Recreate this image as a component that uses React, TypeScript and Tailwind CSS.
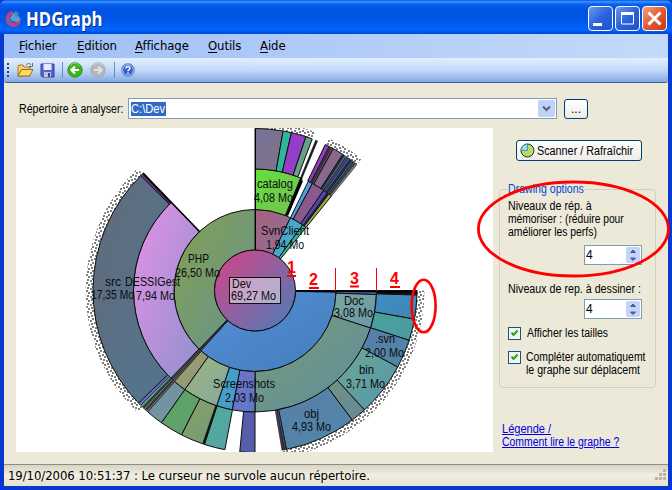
import React from "react";

const CX = 239;
const CY = 162.5;
const R = [0, 40.5, 81, 121.5, 162];

const polar = (r: number, deg: number) => {
  const a = (deg * Math.PI) / 180;
  return `${(CX + r * Math.sin(a)).toFixed(2)} ${(CY - r * Math.cos(a)).toFixed(2)}`;
};

const ring = (r0: number, r1: number, a: number, b: number) => {
  const large = b - a > 180 ? 1 : 0;
  return `M${polar(r0, a)}L${polar(r1, a)}A${r1} ${r1} 0 ${large} 1 ${polar(r1, b)}L${polar(r0, b)}A${r0} ${r0} 0 ${large} 0 ${polar(r0, a)}Z`;
};

// level, start angle, end angle, first colour, last colour
type Segment = [number, number, number, string, string];

const segments: Segment[] = [
  [2, 0, 26, "#a6627f", "#8f6f94"],
  [2, 26, 36, "#479ed0", "#51aec4"],
  [2, 36, 39, "#35b3a0", "#24c184"],
  [2, 90, 91.2, "#111827", "#111827"],
  [2, 91.2, 222, "#568ddb", "#427fb8"],
  [2, 222, 222.7, "#777", "#555"],
  [2, 222.7, 223.6, "#333", "#555"],
  [2, 223.6, 360, "#85a04f", "#659391"],
  [3, 0, 22.1, "#63e13d", "#76bf51"],
  [3, 22.1, 22.9, "#000", "#000"],
  [3, 26, 28.2, "#429de6", "#55a1d2"],
  [3, 28.2, 34.4, "#925588", "#805d96"],
  [3, 34.4, 36.6, "#5c3bb4", "#5249a3"],
  [3, 36.6, 37.4, "#202a48", "#1c2430"],
  [3, 37.4, 39, "#a5b34b", "#80a144"],
  [3, 90, 91.9, "#6670d0", "#5966b4"],
  [3, 91.9, 108, "#79a7a1", "#6998a8"],
  [3, 108, 180, "#789b76", "#5e8da2"],
  [3, 180, 190.8, "#7171cb", "#5d7bc4"],
  [3, 190.8, 198.4, "#3ca0d5", "#4b9dbf"],
  [3, 198.4, 215.3, "#9ab580", "#86a89d"],
  [3, 215.3, 221.6, "#a39f68", "#869780"],
  [3, 221.6, 222.3, "#999", "#555"],
  [3, 222.3, 223.1, "#333", "#777"],
  [3, 223.1, 223.8, "#777", "#333"],
  [3, 223.8, 316.5, "#e392e4", "#9190cf"],
  [4, 0, 10, "#777398", "#817186"],
  [4, 10, 13, "#24bea0", "#39ac98"],
  [4, 13, 18.3, "#9c37cd", "#8e45bf"],
  [4, 18.3, 20.7, "#62a38d", "#6f9c83"],
  [4, 22, 22.7, "#4c3448", "#000"],
  [4, 25.7, 27.3, "#a637c5", "#813cad"],
  [4, 27.3, 28.1, "#35224c", "#5e435f"],
  [4, 28.1, 28.9, "#806071", "#4d394c"],
  [4, 28.9, 32.8, "#926686", "#7f6b98"],
  [4, 32.8, 33.5, "#36304d", "#24243f"],
  [4, 33.5, 34.3, "#568968", "#38674c"],
  [4, 34.3, 35.1, "#6134b5", "#4f45a4"],
  [4, 35.1, 35.9, "#536bc3", "#314e8a"],
  [4, 35.9, 36.7, "#364057", "#111e33"],
  [4, 36.7, 37.4, "#447c9b", "#314153"],
  [4, 37.4, 38.2, "#30353f", "#5d6067"],
  [4, 38.2, 39, "#8d899d", "#656a78"],
  [4, 90, 91.6, "#111", "#111"],
  [4, 91.6, 100.2, "#408cc3", "#3e86b4"],
  [4, 100.2, 107.9, "#4ca098", "#489ca4"],
  [4, 107.9, 118.2, "#597dad", "#5185a4"],
  [4, 118.2, 137.5, "#6ba992", "#5694ad"],
  [4, 137.5, 143.1, "#739386", "#648798"],
  [4, 143.1, 168.8, "#597eaa", "#5088a6"],
  [4, 168.8, 169.6, "#495f70", "#445"],
  [4, 169.6, 170.4, "#648", "#333"],
  [4, 180, 185.4, "#565da9", "#585dac"],
  [4, 190.7, 198.2, "#51ada0", "#55a1a3"],
  [4, 198.2, 198.8, "#111", "#111"],
  [4, 198.8, 207, "#88a064", "#759b7a"],
  [4, 207, 215.3, "#5aa558", "#62a078"],
  [4, 215.3, 221.5, "#7591a5", "#6e969b"],
  [4, 221.5, 222.1, "#999", "#777"],
  [4, 222.1, 222.7, "#555", "#333"],
  [4, 222.7, 223.4, "#999", "#555"],
  [4, 223.4, 224, "#333", "#555"],
  [4, 224, 224.9, "#4eb394", "#51a18c"],
  [4, 224.9, 226, "#756cc9", "#6f61b2"],
  [4, 226, 315.2, "#626b7b", "#51758f"],
  [4, 315.2, 316, "#703389", "#552266"],
  [4, 316, 316.5, "#574b57", "#333"],
];

const hatched: [number, number][] = [
  [0, 20.8],
  [26, 39],
  [90, 170.4],
  [224, 316],
];

// Rows of the 8x8 "large confetti" hatch, one byte per row.
const confetti = [0xb1, 0x30, 0x03, 0x1b, 0xd8, 0xc0, 0x0c, 0x8d];

// text, left, baseline, width
const labels: [string, number, number, number][] = [
  ["catalog", 241, 60, 36],
  ["4,08 Mo", 238, 74, 39],
  ["SvnClient", 245, 107, 48],
  ["1,94 Mo", 250, 121, 38],
  ["PHP", 172, 135, 21],
  ["26,50 Mo", 159, 149, 45],
  ["src", 89, 158, 16],
  ["DESSIGest", 109, 158, 55],
  ["17,35 Mo", 75, 171, 43],
  ["7,94 Mo", 120, 172, 39],
  ["Screenshots", 197, 260, 62],
  ["2,03 Mo", 209, 274, 39],
  ["Doc", 328, 177, 20],
  ["3,08 Mo", 318, 189, 39],
  [".svn", 359, 215, 20],
  ["2,00 Mo", 349, 229, 39],
  ["bin", 343, 246, 15],
  ["3,71 Mo", 330, 260, 39],
  ["obj", 288, 290, 15],
  ["4,93 Mo", 276, 303, 39],
  ["Dev", 216, 160, 19],
  ["69,27 Mo", 215, 172, 45],
];

function DiskChart() {
  return (
    <svg width="477" height="324" viewBox="0 0 477 324" className="block bg-white">
      <defs>
        <pattern id="dots" width="8" height="8" patternUnits="userSpaceOnUse">
          <g fill="#7d7d7d" shapeRendering="crispEdges">
            {confetti.flatMap((row, y) =>
              [0, 1, 2, 3, 4, 5, 6, 7]
                .filter((x) => (row >> (7 - x)) & 1)
                .map((x) => <rect key={`${x}-${y}`} x={x} y={y} width="1" height="1" />)
            )}
          </g>
        </pattern>
        <linearGradient id="devFill" x1="0" y1="0" x2="1" y2="1">
          <stop offset="0.1" stopColor="#ca488b" />
          <stop offset="1" stopColor="#487fb9" />
        </linearGradient>
        {segments.map((s, i) => (
          <linearGradient key={i} id={`g${i}`} x1="0" y1="0" x2="1" y2="1">
            <stop offset="0" stopColor={s[3]} />
            <stop offset="1" stopColor={s[4]} />
          </linearGradient>
        ))}
      </defs>
      {hatched.map(([a, b]) => (
        <path key={a} d={ring(162, 169.5, a, b)} fill="url(#dots)" />
      ))}
      {segments.map((s, i) => (
        <path
          key={i}
          d={ring(R[s[0] - 1], R[s[0]], s[1], s[2])}
          fill={`url(#g${i})`}
          stroke="#0a0f0d"
          strokeWidth={s[2] - s[1] < 1.2 ? 0.6 : 1}
        />
      ))}
      <circle cx={CX} cy={CY} r={40.5} fill="url(#devFill)" stroke="#0a0f0d" />
      <path d="M239.5 1V122" stroke="#000" />
      <path d="M280 163L401 164" stroke="#000" strokeWidth="1.6" />
      <path d="M184 104L127 45" stroke="#000" strokeWidth="1.6" />
      <path d="M270.500 87L285 52L287 53L272 88Z" fill="#000" />
      <rect x="213.5" y="149.5" width="51" height="26" fill="#fff" fillOpacity="0.45" stroke="#111" />
      <g fontFamily="'Liberation Sans', Arial, sans-serif" fontSize="12" fill="#0b0b0b">
        {labels.map(([t, x, y, w]) => (
          <text key={t} x={x} y={y} textLength={w} lengthAdjust="spacingAndGlyphs">
            {t}
          </text>
        ))}
      </g>
    </svg>
  );
}

function Annotations() {
  return (
    <svg width="672" height="490" className="pointer-events-none absolute left-0 top-0">
      <g fill="none" stroke="#f00">
        <ellipse cx="573.4" cy="229" rx="95" ry="47" strokeWidth="2.8" />
        <ellipse cx="423.6" cy="306" rx="12" ry="26.3" strokeWidth="2.6" />
        <path d="M335.5 268v23M376.5 268v23" />
        <path d="M287 276h9M309 288h10M350 286.5h9M390 287h10" strokeWidth="2" />
      </g>
      <g fill="#f00" fontFamily="'Liberation Sans', Arial, sans-serif" fontSize="16" fontWeight="700">
        <text x="287" y="273">1</text>
        <text x="309" y="285">2</text>
        <text x="350" y="284">3</text>
        <text x="390" y="284">4</text>
      </g>
    </svg>
  );
}

function AppIcon() {
  return (
    <svg width="18" height="18" viewBox="0 0 18 18">
      <path d="M8 1A8 8 0 1 0 16 12L12 10A4 4 0 1 1 8 5Z" fill="#c13d83" />
      <path d="M1.5 6A8 8 0 0 0 5 15L8 12A4 4 0 0 1 5 8Z" fill="#8c5a90" />
      <path d="M7 5a4 4 0 0 1 5-2l2 4 2 3-4 2-5-1-2-3z" fill="#5b9fc9" />
      <path d="M10 1a8 8 0 0 1 4 3l-2 3-2-2z" fill="#438cb9" />
    </svg>
  );
}

function OpenIcon() {
  return (
    <svg width="17" height="16" viewBox="0 0 17 16">
      <path d="M1 14V4l1-1h4l1 2h6v9z" fill="#f5d078" stroke="#a87b18" />
      <path d="M1 14L4.500 7.500H16L12.500 14Z" fill="#ffd966" stroke="#9a7015" />
      <path d="M9 3c2-2 4-2 5 0m1.500-2v3.500H12" fill="none" stroke="#546c96" />
    </svg>
  );
}

function SaveIcon() {
  return (
    <svg width="15" height="15" viewBox="0 0 15 15">
      <path d="M1 1h13v13H2.500L1 12.500Z" fill="#5564c8" stroke="#343f9f" />
      <path d="M3.500 1h8v6h-8z" fill="#e3edff" />
      <path d="M4 9h7v5H4z" fill="#b8c0d8" />
      <path d="M8 10h2v4H8z" fill="#39437e" />
    </svg>
  );
}

function RoundArrow({ back }: { back?: boolean }) {
  return (
    <svg width="16" height="16" viewBox="0 0 16 16">
      <circle cx="8" cy="8" r="7.200" fill={back ? "#3db51b" : "#b3b7be"} stroke={back ? "#2c931f" : "#a3a9b3"} />
      <path d="M3 4a6 6 0 0 1 10 0" stroke="#fff" strokeOpacity=".4" fill="none" />
      <path
        d={back ? "M12 8H5M8 4.500L4.500 8 8 11.500" : "M4 8h7M8 4.500L11.500 8 8 11.500"}
        stroke={back ? "#fff" : "#dfe2e7"}
        strokeWidth="2.200"
        fill="none"
      />
    </svg>
  );
}

function HelpIcon() {
  return (
    <svg width="14" height="14" viewBox="0 0 14 14">
      <circle cx="7" cy="7" r="6.400" fill="#2b5fcb" stroke="#6d8fd0" strokeWidth=".8" />
      <circle cx="7" cy="7" r="5.300" fill="none" stroke="#d5e3ff" strokeWidth=".8" />
      <path d="M5 5.500C5 3 9.200 3 9 5.300 9 6.800 7 6.500 7 8.300M7 9.500v1.500" fill="none" stroke="#fff" strokeWidth="1.500" />
    </svg>
  );
}

function CaptionButton({ kind }: { kind: "min" | "max" | "close" }) {
  return (
    <div
      className={
        "flex h-[25px] w-[25px] items-center justify-center rounded-[4px] border border-white " +
        (kind === "close"
          ? "bg-linear-to-br from-[#f0a080] via-[#e35934] to-[#c33a12]"
          : "bg-linear-to-br from-[#6b97f2] via-[#2b62dd] to-[#1e52cf]")
      }
    >
      <svg width="23" height="23" viewBox="0 0 23 23" stroke="#fff" fill="none">
        {kind === "min" && <path d="M4 17.500h9" strokeWidth="3" />}
        {kind === "max" && <path d="M5.500 6v11h12V6" />}
        {kind === "max" && <path d="M5 6.500h13" strokeWidth="3" />}
        {kind === "close" && <path d="M5.500 5.500l12 12M17.500 5.500l-12 12" strokeWidth="3" />}
      </svg>
    </div>
  );
}

function Spinner() {
  return (
    <div className="ml-auto flex h-5 w-[58px] justify-between border border-[#7f9db9] bg-white p-px pl-[1px]">
      <span className="text-[12px] leading-4">4</span>
      <div className="flex w-[14px] flex-col rounded-[2px] bg-[#c3d3fb]">
        {["M4.500 5.500l2.500-2.500 2.500 2.500", "M4.500 3l2.500 2.500 2.500-2.500"].map((d) => (
          <svg key={d} width="14" height="8" viewBox="0 0 14 8">
            <path d={d + "z"} fill="#4d6185" stroke="#4d6185" />
          </svg>
        ))}
      </div>
    </div>
  );
}

function Check() {
  return (
    <div className="h-[13px] w-[13px] shrink-0 border border-[#1c5180] bg-[#f5f5f0]">
      <svg width="11" height="11" viewBox="0 0 11 11">
        <path d="M2.500 4.500l2 2.500 4-4.500" fill="none" stroke="#21a121" strokeWidth="2" />
      </svg>
    </div>
  );
}

const narrow = "block w-max origin-left whitespace-nowrap ";

const menu = [
  ["F", "ichier", "w-[58px]"],
  ["E", "dition", "w-[58px]"],
  ["A", "ffichage", "w-[73px]"],
  ["O", "utils", "w-[52px]"],
  ["A", "ide", "w-[40px]"],
];

export default function App() {
  return (
    <div className="relative flex h-[490px] w-[672px] flex-col overflow-hidden bg-[#0839cf] font-['Liberation_Sans',Arial,sans-serif] text-[12px] text-black">
      <header className="flex h-[34px] shrink-0 items-center rounded-t-[6px] bg-[linear-gradient(180deg,#0058e6_0%,#3c91ff_5%,#0863ef_12%,#0054e3_25%,#0055e5_60%,#0066ff_88%,#0047d0_100%)] pr-[5px] pl-[5px] pt-[3px]">
        <AppIcon />
        <h1 className="ml-[3px] origin-left scale-x-[0.88] font-['Open_Sans',sans-serif] text-[19px] leading-6 font-bold text-white [text-shadow:1px_1px_0_#0a2a8a]">
          HDGraph
        </h1>
        <div className="ml-auto flex gap-[2px]">
          <CaptionButton kind="min" />
          <CaptionButton kind="max" />
          <CaptionButton kind="close" />
        </div>
      </header>

      <div className="mx-1 mb-1 flex flex-1 flex-col bg-[#ece9d8]">
        <nav className="flex h-6 shrink-0 items-center bg-linear-to-r from-[#9ebef5] to-[#c4dafa] pl-[15px] font-['DejaVu_Sans_Condensed','DejaVu_Sans',sans-serif] text-[13px] tracking-[-0.1px]">
          {menu.map(([k, rest, w], i) => (
            <span key={i} className={w}>
              <u className="underline-offset-2">{k}</u>
              {rest}
            </span>
          ))}
        </nav>
        <div className="flex h-[25px] shrink-0 items-center rounded-b-[3px] border-b border-[#3b619c] bg-linear-to-b from-[#e3efff] via-[#c4d9f8] to-[#86a9e2] pl-[3px]">
          <div className="mr-2 flex w-[2px] flex-col gap-[2px]">
            {[0, 1, 2, 3].map((i) => (
              <i key={i} className="h-[2px] w-[2px] bg-[#27417b]" />
            ))}
          </div>
          <OpenIcon />
          <div className="w-[6px]" />
          <SaveIcon />
          <div className="mr-[4px] ml-[7px] h-4 w-px bg-[#6a8ccb]" />
          <RoundArrow back />
          <div className="w-[7px]" />
          <RoundArrow />
          <div className="mr-[6px] ml-[8px] h-4 w-px bg-[#6a8ccb]" />
          <HelpIcon />
        </div>

        <div className="mt-[15px] flex h-[21px] shrink-0 items-center pl-[15px]">
          <label className="w-[109px]">
            <span className={narrow + "scale-x-[0.885]"}>Répertoire à analyser:</span>
          </label>
          <div className="flex h-[21px] w-[429px] items-center justify-between border border-[#7f9db9] bg-white p-px">
            <span className="ml-px h-[14px] w-[35px] bg-[#316ac5] text-[12px] leading-[14px] text-white">
              <span className={narrow + "scale-x-[0.93]"}>C:\Dev</span>
            </span>
            <div className="flex h-[17px] w-[17px] items-center justify-center rounded-[2px] bg-[#c1d2fa]">
              <svg width="9" height="7" viewBox="0 0 9 7">
                <path d="M1 1.500l3.500 3.500L8 1.500" fill="none" stroke="#4d6185" strokeWidth="2" />
              </svg>
            </div>
          </div>
          <button className="ml-[7px] h-5 w-6 rounded-[3px] border border-[#003c74] bg-linear-to-b from-white to-[#ecebe5] text-[12px] leading-4">...</button>
        </div>

        <div className="mt-[9px] flex h-[324px] shrink-0 pl-3">
          <DiskChart />
          <aside className="ml-[6px] w-[157px] pt-3">
            <button className="ml-[17px] flex h-[21px] w-[126px] items-center rounded-[3px] border border-[#003c74] bg-linear-to-b from-white to-[#eeede7] pl-[3px] text-[12px]">
              <svg width="15" height="15" viewBox="0 0 15 15" className="mr-[2px] shrink-0">
                <circle cx="7.500" cy="7.500" r="6.500" fill="#b4dc70" stroke="#263719" />
                <path d="M7.500 7.500V1A6.500 6.500 0 0 0 1 7.500Z" fill="#8ee1e6" stroke="#367b86" strokeWidth=".7" />
              </svg>
              <span className={narrow + "scale-x-[0.9]"}>Scanner / Rafraîchir</span>
            </button>
            <section className="mt-[28px] h-[199px] rounded-[4px] border border-[#d0d0bf] px-2 text-[12px] leading-[13px]">
              <h2 className="-mt-[7px] h-[13px] w-[76px] bg-[#ece9d8] text-[#0046d5]">
                <span className={narrow + "scale-x-[0.882]"}>Drawing options</span>
              </h2>
              <p className="mt-[4px] h-[39px]">
                <span className={narrow + "scale-x-[0.89]"}>Niveaux de rép. à</span>
                <span className={narrow + "scale-x-[0.855]"}>mémoriser : (réduire pour</span>
                <span className={narrow + "scale-x-[0.865]"}>améliorer les perfs)</span>
              </p>
              <div className="mt-[6px] -mr-[6px] pr-[11px]">
                <Spinner />
              </div>
              <p className="mt-[18px]">
                <span className={narrow + "scale-x-[0.89]"}>Niveaux de rep. à dessiner :</span>
              </p>
              <div className="mt-[3px] -mr-[6px] pr-[11px]">
                <Spinner />
              </div>
              <div className="mt-[8px] flex gap-[6px]">
                <Check />
                <span className={narrow + "scale-x-[0.87]"}>Afficher les tailles</span>
              </div>
              <div className="mt-[11px] flex h-[26px] gap-[5px]">
                <Check />
                <div>
                  <span className={narrow + "scale-x-[0.865]"}>Compléter automatiquemt</span>
                  <span className={narrow + "scale-x-[0.885]"}>le graphe sur déplacemt</span>
                </div>
              </div>
            </section>
            <a className="mt-[35px] ml-[3px] block text-[12px] leading-[13px] text-[#0000e0]">
              <span className={narrow + "underline scale-x-[0.92]"}>Légende /</span>
              <span className={narrow + "underline scale-x-[0.87]"}>Comment lire le graphe ?</span>
            </a>
          </aside>
        </div>

        <footer className="mt-auto flex h-[22px] items-center justify-between border-t border-[#8f8d80] bg-linear-to-b from-[#d8d5c5] via-[#f1efe3] to-[#e5e1d0] pl-1 font-['DejaVu_Sans_Condensed','DejaVu_Sans',sans-serif] text-[13px]">
          <span className="tracking-[-0.07px]">19/10/2006 10:51:37 : Le curseur ne survole aucun répertoire.</span>
          <svg width="13" height="13" viewBox="0 0 13 13" fill="#b8b4a1">
            <path d="M8 0h3v3H8zM4 4h3v3H4zM8 4h3v3H8zM0 8h3v3H0zM4 8h3v3H4zM8 8h3v3H8z" />
          </svg>
        </footer>
      </div>
      <Annotations />
    </div>
  );
}
